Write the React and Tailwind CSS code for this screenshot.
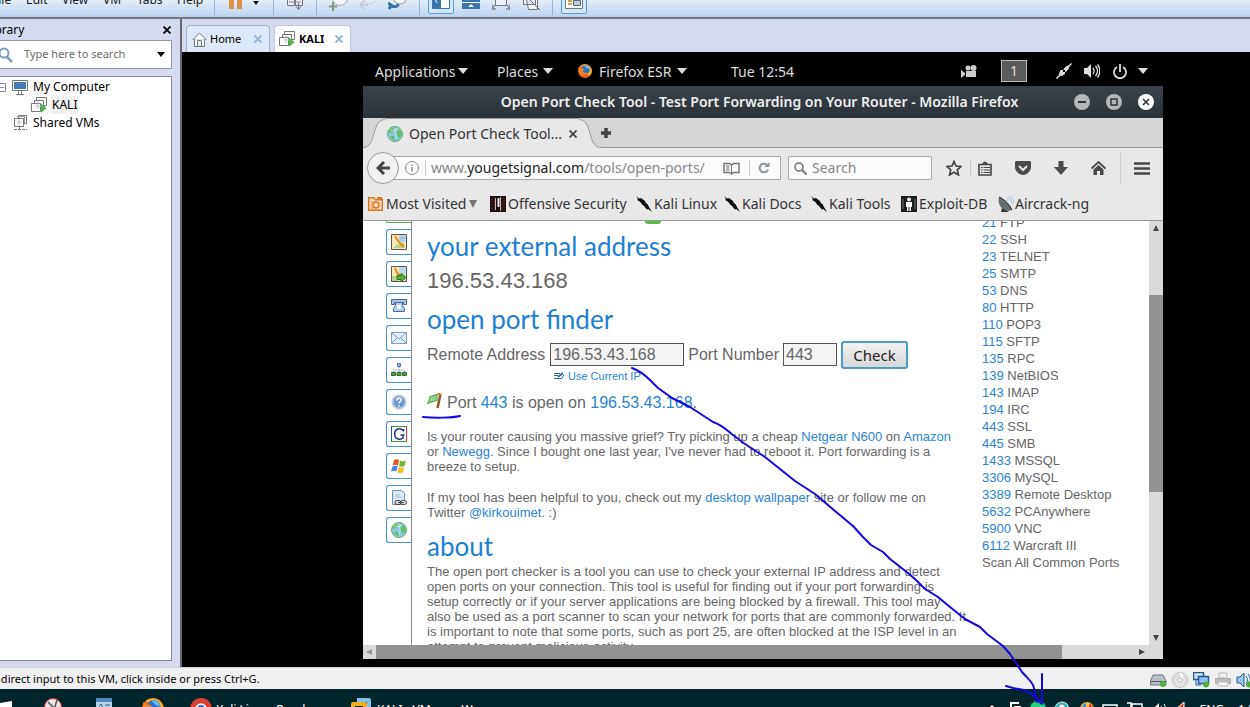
import React from "react";

const ports = [
    ["21", "FTP"], ["22", "SSH"], ["23", "TELNET"], ["25", "SMTP"], ["53", "DNS"],
    ["80", "HTTP"], ["110", "POP3"], ["115", "SFTP"], ["135", "RPC"], ["139", "NetBIOS"],
    ["143", "IMAP"], ["194", "IRC"], ["443", "SSL"], ["445", "SMB"], ["1433", "MSSQL"],
    ["3306", "MySQL"], ["3389", "Remote Desktop"], ["5632", "PCAnywhere"], ["5900", "VNC"], ["6112", "Warcraft III"],
];

/* ---------- icons ---------- */

function Svg({ w = 16, h = 16, box, className = "", children }) {
    return (
        <svg width={w} height={h} viewBox={box || `0 0 ${w} ${h}`} fill="none" aria-hidden="true" className={`shrink-0 ${className}`}>
            {children}
        </svg>
    );
}

const Caret = ({ className = "" }) => (
    <Svg w={10} h={6} className={className}><path d="M0 0h10L5 6z" fill="currentColor" /></Svg>
);

const Close = ({ className = "" }) => (
    <Svg w={8} h={8} className={className}><path d="M0.5 0.5l7 7M7.5 0.5l-7 7" stroke="currentColor" strokeWidth="1.8" /></Svg>
);

const VmIcon = () => (
    <Svg w={16} h={16}>
        <path d="M5.500 3v-2.500h10v8h-3" fill="#fff" stroke="#777" />
        <path d="M3.500 6v-2.500h9v8H9" fill="#fff" stroke="#777" />
        <path d="M9.500 14.500h-9v-8h9z" fill="#fff" stroke="#777" />
        <path d="M4 9h7M7 4v8" stroke="#c4bfd8" />
        <path d="M10 6.500l5.500 4.500-5.500 5z" fill="#4fb648" />
    </Svg>
);

const SharedIcon = () => (
    <Svg w={14} h={16}>
        <path d="M4.500 3.500v-3h8v8h-2" stroke="#777" />
        <path d="M0.500 3.500h9v8h-9z" fill="#fff" stroke="#777" />
        <path d="M2.500 1.500h8v8" stroke="#999" />
        <path d="M3 7h5M5 4v7" stroke="#bbb" />
        <path d="M5.500 12v3M0 14.500h13" stroke="#777" strokeDasharray="3 1" />
    </Svg>
);

const ComputerIcon = () => (
    <Svg w={16} h={15}>
        <path d="M0.500 0.500h15v10h-15z" fill="#fff" stroke="#777" />
        <path d="M2 2h12v7H2z" fill="#3f7cb8" />
        <path d="M6.500 11v3M9.500 11v3M4 14.500h8" stroke="#777" />
    </Svg>
);

const Firefox = ({ size = 14 }) => (
    <Svg w={size} h={size} box="0 0 16 16">
        <circle cx="8" cy="8" r="8" fill="#e8641b" />
        <path d="M3 2a8 8 0 0 1 12.500 4c.8 4-1 6-3 7z" fill="#f7b52c" />
        <circle cx="8.500" cy="6.500" r="5" fill="#2b6fc2" />
        <path d="M7 2c3-1 6 1 6 4l-3-1z" fill="#69c3ee" />
        <path d="M1 3c1 0 2 .5 2.500 1.500 1.500 0 3 .5 4 2L5.500 8c1 2.500 4 2.500 6 1-1 4-6 5-9 2C.5 9 .3 5 1 3z" fill="#f0802a" />
    </Svg>
);

const Globe = ({ size = 16 }) => (
    <Svg w={size} h={size} box="0 0 16 16">
        <circle cx="8" cy="8" r="7.500" fill="#8cc8e6" stroke="#5fae5c" />
        <path d="M1.500 6c1-3 4-4.500 6-4l-1 3-3 2zM9 6l3-3c2 1.500 3 4 2.500 6L12 12l-2-3zM3 10h4l1 4c-2 0-4-1-5-4z" fill="#5fc163" />
        <path d="M3 4c3 1 6 0 8-1M7 2c2 3 3 6 1 11" stroke="#fff" strokeOpacity=".5" />
    </Svg>
);

const KaliIcon = () => (
    <Svg w={16} h={16}>
        <path d="M0 0l3 2.500 2-.5 4 3 .5 2 2 1 1.500 3 3 5-4.500-3.500-1.500-2.500-3.500-1-2.500-3.500L1 4l1-1z" fill="#111" />
        <path d="M4 4l5 3.500M8 8l4 5" stroke="#111" strokeWidth="2.500" />
    </Svg>
);

const MostVisited = () => (
    <Svg w={15} h={15}>
        <path d="M.7 1.700h5l1.500 2h7.100v10.600H.7z" fill="#f8dcc0" stroke="#d9761d" strokeWidth="1.400" />
        <path d="M9 1h5v2H9z" fill="#d9761d" />
        <circle cx="8" cy="9" r="3" stroke="#d9761d" strokeWidth="1.400" />
        <path d="M3 6h2M3 9h1M3 12h2" stroke="#d9761d" />
    </Svg>
);

const OffSec = () => (
    <Svg w={16} h={16}>
        <path d="M0 0h16v16H0z" fill="#1a0d0d" />
        <path d="M2 2v12M4.500 1v14M12 2v12M14 1v14" stroke="#6b2a26" strokeDasharray="2 1" />
        <path d="M5.500 2v12M10.500 1v14" stroke="#bbb" />
        <path d="M7.500 2h2v9h-2z" fill="#eee" />
    </Svg>
);

const ExploitIcon = () => (
    <Svg w={16} h={16}>
        <path d="M0 0h16v16H0z" fill="#1c1c1c" />
        <circle cx="8" cy="3.500" r="2" fill="#fff" />
        <path d="M5 6h6v5h-1v4H8.500v-4h-1v4H6v-4H5z" fill="#fff" />
        <path d="M2 3v10M14 3v10" stroke="#777" />
    </Svg>
);

const AircrackIcon = () => (
    <Svg w={16} h={16}>
        <path d="M1 1c-2 6 2 13 9 14l4-1C12 9 7 3 1 1z" fill="#667070" />
        <path d="M1 1c5 2 10 7 13 13" stroke="#222" />
        <path d="M8 5l2-1M9 2c3 0 5 3 5 6M11 0c3 1 5 4 5 8" stroke="#9cc4e8" />
        <path d="M4 12l-1 4h8z" fill="#333" />
    </Svg>
);

const sideIcons = [
    <Svg key="map"><path d="M.5.500h15v15H.500z" fill="#f4eab5" stroke="#555" /><path d="M8 1h7v7H8z" fill="#bcd8ee" /><path d="M2 14c3-1 2-3 5-4s3-1 6-1v5z" fill="#b9d58a" /><path d="M4 2l3 5 6 6" stroke="#e58a1c" strokeWidth="2" /><path d="M11 1v7M8 4h7" stroke="#8fb4d6" /></Svg>,
    <Svg key="trace"><path d="M.5.500h15v15H.500z" fill="#f4eab5" stroke="#555" /><path d="M8 1h7v7H8z" fill="#bcd8ee" /><path d="M1 10h6v5H1z" fill="#b9d58a" /><path d="M4 2l2 5 4 3" stroke="#e58a1c" strokeWidth="2" /><path d="M6 9.500h4v-2l5.500 4-5.500 4v-2H6z" fill="#57ad3c" stroke="#2e7a20" /></Svg>,
    <Svg key="phone"><path d="M.5 1.500h15v5h-3v-2h-9v2h-3z" fill="#a9c3e6" stroke="#46699c" /><path d="M4.500 4.500h7v3l2 3v3h-11v-3l2-3z" fill="#b4cceb" stroke="#46699c" /><path d="M6 7h4v4H6z" fill="#fff" /></Svg>,
    <Svg key="mail"><path d="M.5 2.500h15v11H.500z" fill="#e3eefb" stroke="#7d9cc8" /><path d="M1 3l7 6 7-6M1 13l5-5M15 13l-5-5" stroke="#7d9cc8" /></Svg>,
    <Svg key="net"><path d="M6.500 1.500h3v3h-3z" fill="#8fb2e0" stroke="#5679ad" /><path d="M8 5v5M2.500 10V8h11v2" stroke="#777" strokeDasharray="1 1" /><path d="M.5 10.500h4v3h-4zM6 10.500h4v3H6zM11.500 10.500h4v3h-4z" fill="#56a052" stroke="#2f6d2d" /></Svg>,
    <Svg key="help"><circle cx="8" cy="8" r="6.500" fill="#6c96d2" stroke="#b9c8dd" strokeWidth="2" /><path d="M5.800 6.500c0-3 4.500-3 4.500-.3 0 1.500-2.300 1.500-2.300 3.300M8 11v1.600" stroke="#fff" strokeWidth="1.600" /></Svg>,
    <Svg key="g"><path d="M.5.500h15v15H.500z" fill="#fff" /><path d="M0 .500h16" stroke="#3b9a3b" /><path d="M.5 0v16" stroke="#2a51b4" /><path d="M15.500 0v16" stroke="#d33" /><path d="M0 15.500h16" stroke="#3b9a3b" /><path d="M12.500 5.500V3M12.500 5C11 2.500 8.500 2.500 7 3c-4.500 1.500-4.300 9 0 10 2 .5 4 0 5-1V9M9.500 9h4" stroke="#23348f" strokeWidth="1.500" /></Svg>,
    <Svg key="win"><path d="M3 2c2-1 4-1 5 0L7 7.500c-2-1-4-1-5.500 0z" fill="#e2542c" /><path d="M9 2.500c2 1 4 1 6 0L13.500 8c-2 1-4 1-5.500 0z" fill="#7ab83a" /><path d="M1.500 8.500c2-1 4-1 5.200 0l-1.400 5c-1.500-1-3.500-1-5.300 0z" fill="#4a86d8" /><path d="M7.700 9c2 1 4 1 5.500 0L12 14.500c-2 1-4 1-5.600 0z" fill="#f2bf2e" /></Svg>,
    <Svg key="page"><path d="M1.500.500h9l3 3v11h-12z" fill="#dce9f8" stroke="#6f8fb9" /><path d="M4 5h5M4 7h7" stroke="#a8bfdc" /><rect x="4" y="10.500" width="6" height="4" rx="2" fill="#ddd" stroke="#444" /><rect x="9.500" y="10.500" width="6" height="4" rx="2" fill="#ddd" stroke="#444" /><path d="M7 12.500h6" stroke="#444" /></Svg>,
    <Globe key="globe" />,
];

/* ---------- VMware chrome ---------- */

function MenuBar() {
    return (
        <header className="flex h-[19px] shrink-0 flex-col justify-end overflow-hidden border-b-2 border-[#747683] bg-linear-to-b from-[#e4edf8] to-[#bcd3ee] text-[12px]">
            <div className="mb-[2px] flex h-[28px] shrink-0 items-center text-[#222]">
                <nav className="-ml-[8px] mb-[2px] flex w-[222px] shrink-0 leading-[18px]">
                    <button className="w-[34px] text-left">File</button>
                    <button className="w-[36px] text-left">Edit</button>
                    <button className="w-[41px] text-left">View</button>
                    <button className="w-[34px] text-left">VM</button>
                    <button className="w-[40px] text-left">Tabs</button>
                    <button className="text-left">Help</button>
                </nav>
                <div className="flex items-center self-stretch">
                    <span className="h-full w-px bg-[#94b4d8]" />
                    <Svg w={13} h={20} className="ml-[14px]"><path d="M0 0h5v18H0zM8 0h5v18H8z" fill="#d9924a" /></Svg>
                    <Svg w={6} h={12} className="ml-[11px]"><path d="M0 6h6L3 10z" fill="#111" /></Svg>
                    <span className="ml-[14px] h-full w-px bg-[#94b4d8]" />
                    <Svg w={17} h={20} className="ml-[13px]"><path d="M.5 4.500h7v10h-7zM8.500 4.500h7v10h-7z" fill="#eef" stroke="#777" /><path d="M2 11h12" stroke="#888" /><path d="M11.500 12v6M9 15.500l2.500 3 2.500-3" stroke="#777" /></Svg>
                    <span className="ml-[12px] h-full w-px bg-[#94b4d8]" />
                    <Svg w={20} h={20} className="ml-[12px]"><circle cx="11" cy="7" r="7.500" fill="#f4f6f9" stroke="#aaa" /><path d="M4 11v9M0 15.500h8" stroke="#7d9c7d" strokeWidth="2" /></Svg>
                    <Svg w={18} h={20} className="ml-[11px] opacity-60"><circle cx="10" cy="6" r="7" stroke="#bbb" /><path d="M1 14h7M4 10l-4 4 4 4" stroke="#bbb" strokeWidth="2" /></Svg>
                    <Svg w={20} h={20} className="ml-[10px]"><circle cx="12" cy="6" r="7" fill="#f4f6f9" stroke="#999" /><path d="M0 12l3 2-2 4M3 15.500h5l3-2" stroke="#3a74ae" strokeWidth="3" /></Svg>
                    <span className="ml-[11px] h-full w-px bg-[#94b4d8]" />
                    <button aria-label="Show library" className="ml-[8px] flex h-[26px] w-[26px] items-center justify-center rounded-[2px] border border-[#5b9bd8] bg-[#d4e6f9]">
                        <Svg w={18} h={20}><path d="M.5 0h17v17.500H.500z" fill="#fff" stroke="#3a74ae" /><path d="M1 0h8v17H1z" fill="#3a74ae" /><path d="M3 8l2 4" stroke="#fff" /></Svg>
                    </button>
                    <Svg w={18} h={20} className="ml-[8px]"><path d="M0 0h18v18H0z" fill="#3a74ae" /><path d="M0 11.500h18" stroke="#fff" /><path d="M6 16l3-3 3 3z" fill="#fff" /></Svg>
                    <Svg w={18} h={20} className="ml-[12px]"><path d="M3.500 0v14.500h11V0" fill="#eef3fa" stroke="#777" /><path d="M3 14l-3 4M15 14l3 4M0 13v5h4M18 13v5h-4" stroke="#666" /></Svg>
                    <Svg w={18} h={20} className="ml-[12px]"><path d="M1.500 0v13.500h12V0M4.500 8.500h11v10h-9z" fill="#eef3fa" stroke="#777" /><path d="M5 6l13 13" stroke="#666" /></Svg>
                    <span className="ml-[12px] h-full w-px bg-[#94b4d8]" />
                    <button aria-label="Thumbnails" className="ml-[8px] flex h-[26px] w-[26px] items-center justify-center rounded-[2px] border border-[#5b9bd8] bg-[#d4e6f9]">
                        <Svg w={18} h={20}><path d="M.5 0h17v17.500H.500z" fill="#fff" stroke="#777" /><path d="M3 10h4M3 13h4" stroke="#c9a35c" strokeWidth="2" /><path d="M8.500 9.500h7v5h-7z" fill="#b7cde8" stroke="#666" /></Svg>
                    </button>
                </div>
            </div>
        </header>
    );
}

function Library() {
    return (
        <aside className="flex w-[180px] shrink-0 flex-col pr-[8px] text-[12px] text-black">
            <div className="flex h-[21px] items-center justify-between">
                <span className="-ml-[15px]">Library</span>
                <button aria-label="Close library" className="pr-[1px]"><Close /></button>
            </div>
            <label className="flex h-[29px] items-center border border-l-0 border-[#99a] bg-white">
                <Svg w={14} h={16}><circle cx="4" cy="6" r="4.500" stroke="#7d9cc0" strokeWidth="2" /><path d="M7 10l5 5" stroke="#7d9cc0" strokeWidth="2.500" /></Svg>
                <input type="text" aria-label="Search library" placeholder="Type here to search" className="ml-[10px] w-0 flex-1 text-[11px] outline-none placeholder:text-[#6b6b6b]" />
                <Svg w={8} h={5} className="mr-[6px]"><path d="M0 0h8L4 5z" fill="#000" /></Svg>
            </label>
            <ul className="mb-[6px] mt-[7px] flex-1 border border-l-0 border-[#889] bg-white pt-[1px] leading-[18px]">
                <li className="flex items-center">
                    <Svg w={6} h={9} className="mr-[6px]"><path d="M-3 .500h8.500v8H-3M0 4.500h4" stroke="#88a" /></Svg>
                    <ComputerIcon /><span className="ml-[5px]">My Computer</span>
                </li>
                <li className="flex items-center pl-[31px]"><VmIcon /><span className="ml-[4px] bg-[#efefef] px-[1px]">KALI</span></li>
                <li className="flex items-center pl-[14px]"><SharedIcon /><span className="ml-[5px]">Shared VMs</span></li>
            </ul>
        </aside>
    );
}

function StatusBar() {
    return (
        <footer className="flex h-[22px] shrink-0 items-center justify-between overflow-hidden border-t border-[#d0d0d0] bg-[#f0f0f0] pt-[2px] text-[11px] text-black">
            <span className="-ml-[14px] whitespace-nowrap">To direct input to this VM, click inside or press Ctrl+G.</span>
            <div className="-mr-[6px] flex items-center gap-[5px]">
                <Svg w={17} h={16}><path d="M3 3h10l3 6v4H.500V9z" fill="#b9bfc9" stroke="#70757e" /><path d="M1 9.500h15" stroke="#555" /><circle cx="13" cy="12" r="3" fill="#4caf3a" /></Svg>
                <Svg w={16} h={16}><circle cx="8" cy="8" r="7.500" fill="#e2e2e2" stroke="#c4c4c4" /><circle cx="8" cy="8" r="2" fill="#fff" stroke="#bbb" /><path d="M8 1l3 5" stroke="#fff" strokeWidth="2" /></Svg>
                <Svg w={17} h={16}><path d="M.5.500h10v7H.500z" fill="#cfe2f6" stroke="#1d5b99" strokeWidth="1.500" /><path d="M5.500 4.500h10v7h-10z" fill="#8fc0ef" stroke="#1d5b99" strokeWidth="1.500" /><path d="M3 8v5h5" stroke="#1d5b99" /><circle cx="13" cy="12.500" r="3" fill="#4caf3a" /></Svg>
                <Svg w={16} h={16}><path d="M4 1h8v5H4z" fill="#eee" stroke="#bbb" /><path d="M.5 6.500h15v5H.500z" fill="#bbb" stroke="#aaa" /><path d="M3 10h10v4H3z" fill="#f4f4f4" stroke="#bbb" /></Svg>
                <Svg w={20} h={16}><path d="M1 5h3l4-4v14l-4-4H1z" fill="#9cc4ea" stroke="#1d5b99" /><path d="M10 4c2 3 2 5 0 8M12 2c3 4 3 8 0 12" stroke="#1d5b99" /><circle cx="13" cy="12.500" r="3" fill="#4caf3a" /></Svg>
            </div>
        </footer>
    );
}

function Taskbar() {
    return (
        <div className="h-[18px] shrink-0 overflow-hidden bg-[#02252b] text-[12px] text-white">
            <div className="flex h-[40px] items-center whitespace-nowrap">
                <div className="flex flex-1 items-center">
                    <Svg w={12} h={20}><path d="M0 4l12-2v8H0zM0 11h12v8L0 17z" fill="#fff" /></Svg>
                    <Svg w={18} h={24} className="ml-[32px]"><circle cx="9" cy="10" r="8.500" fill="#e8e4e4" stroke="#c33" /><path d="M4 5l8 8M13 3l-3 10" stroke="#555" strokeWidth="1.500" /></Svg>
                    <Svg w={16} h={22} className="ml-[34px]"><path d="M0 0h16v22H0z" fill="#b8d4ec" /><path d="M0 0h16v4H0z" fill="#4b87c0" /><path d="M3 8l2-2 2 4M9 7h5M9 10h5" stroke="#357" /></Svg>
                    <span className="ml-[30px]"><Firefox size={22} /></span>
                    <Svg w={22} h={22} className="ml-[26px]"><circle cx="11" cy="11" r="11" fill="#da4236" /><path d="M0 11a11 11 0 0 0 9 11l4-8z" fill="#2ea44f" /><path d="M22 9H11v13a11 11 0 0 0 11-13z" fill="#f7c92c" /><circle cx="11" cy="11" r="5" fill="#3f7de0" stroke="#fff" strokeWidth="1.500" /></Svg>
                    <span className="ml-[4px] w-[135px] pt-[2px]">Kali Linux, Rand...</span>
                    <Svg w={20} h={22} className="mr-[6px]"><path d="M6 2h12v13" stroke="#7cc4ea" strokeWidth="4" strokeLinejoin="round" /><path d="M2 6h12v13H2z" fill="#08313a" stroke="#f2b01e" strokeWidth="4" strokeLinejoin="round" /></Svg>
                    <span className="pt-[2px]">KALI - VMware W...</span>
                </div>
                <div className="flex items-center gap-[8px]">
                    <Svg w={10} h={10} className="mr-[5px]"><path d="M1 6l4-4 4 4" stroke="#fff" strokeWidth="1.500" /></Svg>
                    <Svg w={12} h={14}><path d="M1 6V1h8M5 13V5h6" stroke="#fff" strokeWidth="2" /></Svg>
                    <Svg w={16} h={16}><circle cx="8" cy="8" r="8" fill="#1fd67c" /></Svg>
                    <Svg w={16} h={16}><circle cx="8" cy="8" r="7" fill="#38aeb4" stroke="#cfe" /><path d="M6 6c1-3 5-1 3 2" stroke="#fff" strokeWidth="2" /></Svg>
                    <Svg w={16} h={16}><circle cx="9" cy="8" r="7" fill="#f2c230" /><path d="M2 8L8 1v8z" fill="#3f7de0" /><path d="M12 2l4 6h-6z" fill="#d33" /></Svg>
                    <Svg w={16} h={10}><path d="M1 1h14v8H1z" stroke="#fff" strokeWidth="1.500" /></Svg>
                    <Svg w={17} h={14}><path d="M1 1h4v10M6 2h10v9H6z" stroke="#fff" strokeWidth="1.500" /></Svg>
                    <Svg w={16} h={14}><path d="M1 5h3l4-4v12L4 9H1z" fill="#fff" /><path d="M10 4c1 2 1 4 0 6M13 2c2 3 2 7 0 10" stroke="#fff" /></Svg>
                    <Svg w={14} h={16}><path d="M1 8l8-7v14z" fill="#d9472c" stroke="#fff" /></Svg>
                    <span className="ml-[2px] pt-[2px]">ENG</span>
                    <span className="ml-[6px] w-[12px] self-start pt-[1px] leading-[20px]">1:26</span>
                </div>
            </div>
        </div>
    );
}

/* ---------- guest desktop ---------- */

function GnomeBar() {
    return (
        <div className="flex h-[34px] shrink-0 items-center pt-[4px] text-[14px] text-[#ddd]">
            <button className="ml-[12px] flex w-[122px] items-center gap-[3px]">Applications <Caret /></button>
            <button className="flex w-[81px] items-center gap-[5px]">Places <Caret /></button>
            <button className="flex w-[153px] items-center gap-[5px]">
                <Firefox /><span className="ml-[2px]">Firefox ESR</span> <Caret />
            </button>
            <span>Tue 12:54</span>
            <div className="ml-auto mr-[15px] flex items-center">
                <Svg w={16} h={13}><circle cx="7" cy="3" r="2.500" fill="#ccc" /><circle cx="12.500" cy="3" r="3" fill="#ccc" /><path d="M5 6h10v6H5zM0 5l4 3v2l-4 3z" fill="#ccc" /></Svg>
                <button className="ml-[24px] h-[22px] w-[26px] border border-[#bbb] bg-[#5b5b5b] leading-[20px]">1</button>
                <Svg className="ml-[29px]"><path d="M15.500.500L10 6" stroke="#ddd" strokeWidth="1.500" /><path d="M.5 15.500L6 10" stroke="#ddd" strokeWidth="1.500" /><path d="M2.500 12l2-5 2.500 0 0 2 2 0 0 2-3 2z" fill="#ddd" /><path d="M7.500 6l3-3 3-.5-.5 3-3 3.500-1-.5v-1.500H7.500z" fill="#ddd" /></Svg>
                <Svg w={16} h={14} className="ml-[12px]"><path d="M0 4h3l4-4v14l-4-4H0z" fill="#ddd" /><path d="M9 4c1.500 2 1.500 4 0 6M11.500 2c2.500 3 2.500 7 0 10M13.500.500c3 4 3 9 0 13" stroke="#ddd" strokeWidth="1.300" /></Svg>
                <Svg w={14} h={15} className="ml-[13px]"><path d="M4 3a6 6 0 1 0 6 0M7 0v8" stroke="#ddd" strokeWidth="1.800" /></Svg>
                <span className="ml-[11px]"><Caret /></span>
            </div>
        </div>
    );
}

function TitleBar() {
    return (
        <div className="flex h-[32px] shrink-0 items-center bg-linear-to-b from-[#3a434b] to-[#2b3238] pl-[82px] pr-[9px]">
            <h1 className="flex-1 whitespace-nowrap pb-[2px] text-center text-[14px] font-semibold text-[#eee]">Open Port Check Tool - Test Port Forwarding on Your Router - Mozilla Firefox</h1>
            <div className="flex gap-[16px]">
                <button aria-label="Minimize" className="rounded-full bg-[#b5b8ba]"><Svg><path d="M4 8h8" stroke="#2d343a" strokeWidth="2" /></Svg></button>
                <button aria-label="Maximize" className="rounded-full bg-[#b5b8ba]"><Svg><path d="M5 5h6v6H5z" stroke="#2d343a" strokeWidth="1.500" /></Svg></button>
                <button aria-label="Close window" className="rounded-full bg-white"><Svg><path d="M5 5l6 6M11 5l-6 6" stroke="#2d343a" strokeWidth="1.600" /></Svg></button>
            </div>
        </div>
    );
}

function TabStrip() {
    return (
        <div className="flex h-[30px] shrink-0 bg-[#d5d5d5] text-[14px] text-[#333]">
            <Svg w={22} h={30}><path d="M0 30v-1c14 0 8-28 22-28v29z" fill="#e8e8e8" /><path d="M0 29.500c14 0 8-28 22-28" stroke="#999" /></Svg>
            <div className="flex w-[194px] items-center border-t border-[#999] bg-[#e8e8e8]">
                <span className="ml-[2px] flex"><Globe /></span>
                <span className="ml-[6px] flex-1 whitespace-nowrap">Open Port Check Tool...</span>
                <button aria-label="Close tab" className="mr-[2px] text-[#444]"><Close /></button>
            </div>
            <Svg w={22} h={30}><path d="M22 30v-1C8 29 14 1 0 1v29z" fill="#e8e8e8" /><path d="M22 29.500C8 29.500 14 1.500 0 1.500" stroke="#999" /></Svg>
            <div className="flex flex-1 items-center border-b border-[#999]">
                <button aria-label="New tab"><Svg w={10} h={10}><path d="M5 0v10M0 5h10" stroke="#444" strokeWidth="3.500" /></Svg></button>
            </div>
        </div>
    );
}

function NavBar() {
    return (
        <div className="flex h-[40px] shrink-0 items-center bg-[#e8e8e8] pl-[4px] pr-[13px] text-[14px]">
            <button aria-label="Back" className="z-10 flex size-[32px] shrink-0 items-center justify-center rounded-full border border-[#999] bg-[#f2f2f2]">
                <Svg w={15} h={14}><path d="M8 1L2 7l6 6M2 7h12" stroke="#444" strokeWidth="3" /></Svg>
            </button>
            <div className="-ml-[8px] flex h-[24px] flex-1 items-center border border-[#aaa] bg-[#fbfbfb] pl-[13px]">
                <Svg w={14} h={14}><circle cx="7" cy="7" r="6.500" stroke="#888" /><path d="M7 6v4.500M7 3.500v1.500" stroke="#888" strokeWidth="1.500" /></Svg>
                <span className="ml-[6px] h-[16px] w-px bg-[#ccc]" />
                <span className="ml-[5px] flex-1 whitespace-nowrap pb-[1px] text-[#888]">www.<span className="text-[#222]">yougetsignal.com</span>/tools/open-ports/</span>
                <Svg w={17} h={13}><path d="M1 1.500h5.500l2 1.500 2-1.500H16v9h-5.500l-2 1.500-2-1.500H1z" stroke="#777" strokeWidth="1.500" /><path d="M3 4h3.500M3 6h3.500M3 8h3.500M8.500 3v8" stroke="#777" /></Svg>
                <span className="ml-[9px] h-[16px] w-px bg-[#ccc]" />
                <button aria-label="Reload" className="ml-[8px] mr-[10px]"><Svg w={12} h={12}><path d="M10 7.500a4.300 4.300 0 1 1-1-4.500" stroke="#8a949e" strokeWidth="2" /><path d="M11.500 0v5h-5z" fill="#8a949e" /></Svg></button>
            </div>
            <label className="ml-[7px] flex h-[24px] w-[144px] items-center rounded-[2px] border border-[#aaa] bg-[#fbfbfb] pl-[5px]">
                <Svg w={13} h={13}><circle cx="5" cy="5" r="4" stroke="#888" strokeWidth="1.800" /><path d="M8 8l5 5" stroke="#888" strokeWidth="2.500" /></Svg>
                <input type="text" aria-label="Search" placeholder="Search" className="ml-[5px] w-0 flex-1 pb-[1px] outline-none placeholder:text-[#888]" />
            </label>
            <div className="ml-[14px] flex items-center">
                <Svg><path d="M8 1.500l2 4.500 5 .5-3.700 3.300L12.500 15 8 12.200 3.500 15l1.200-5.200L1 6.500 6 6z" stroke="#444" strokeWidth="1.700" /></Svg>
                <span className="ml-[8px] h-[18px] w-px bg-[#ccc]" />
                <Svg w={14} h={15} className="ml-[7px]"><path d="M1 3.500h12v10.500H1z" stroke="#444" strokeWidth="1.600" /><path d="M5 3a2 2 0 0 1 4 0z" fill="#444" stroke="#444" /><path d="M3 6.500h1.500M5.500 6.500H12M3 9h1.500M5.500 9H12M3 11.500h1.500M5.500 11.500H12" stroke="#444" strokeWidth="1.200" /></Svg>
                <Svg w={16} h={14} className="ml-[23px]"><path d="M1 0h14l1 1v5c0 4-4 8-8 8S0 10 0 6V1z" fill="#4a4a4a" /><path d="M4 5l4 4 4-4" stroke="#e8e8e8" strokeWidth="2" /></Svg>
                <Svg w={14} h={14} className="ml-[23px]"><path d="M4.500 0h5v6H14l-7 8-7-8h4.500z" fill="#4a4a4a" /></Svg>
                <Svg w={15} h={14} className="ml-[23px]"><path d="M.5 7.500l7-6.500 7 6.500" stroke="#4a4a4a" strokeWidth="1.800" /><path d="M2.500 8.500l5-4.500 5 4.500V14H9v-4H6v4H2.500z" fill="#4a4a4a" /></Svg>
                <span className="ml-[14px] h-[32px] w-px bg-[#d0d0d0]" />
                <button aria-label="Menu" className="ml-[13px]"><Svg w={16} h={13}><path d="M0 1.500h16M0 6.500h16M0 11.500h16" stroke="#444" strokeWidth="2.500" /></Svg></button>
            </div>
        </div>
    );
}

function Bookmarks() {
    return (
        <nav className="flex h-[33px] shrink-0 items-center whitespace-nowrap border-b border-[#999] bg-[#e8e8e8] pb-[1px] pl-[5px] text-[14px] text-[#333]">
            <a href="#most" className="flex w-[122px] items-center gap-[3px]"><MostVisited />Most Visited <Svg w={8} h={8}><path d="M0 0h8L4 8z" fill="#777" /></Svg></a>
            <a href="#offsec" className="flex w-[146px] items-center gap-[2px]"><OffSec />Offensive Security</a>
            <a href="#kali" className="flex w-[88px] items-center gap-[2px]"><KaliIcon />Kali Linux</a>
            <a href="#docs" className="flex w-[87px] items-center gap-[2px]"><KaliIcon />Kali Docs</a>
            <a href="#tools" className="flex w-[90px] items-center gap-[2px]"><KaliIcon />Kali Tools</a>
            <a href="#exploit" className="flex w-[97px] items-center gap-[2px]"><ExploitIcon />Exploit-DB</a>
            <a href="#aircrack" className="flex items-center gap-[1px]"><AircrackIcon />Aircrack-ng</a>
        </nav>
    );
}

const A = ({ children }) => <a href="#link" className="text-[#2a84d2]">{children}</a>;

const Heading = ({ children, className }) => (
    <h2 className={`font-[Lato] text-[26px] leading-[32px] text-[#1c7fd2] ${className}`}>{children}</h2>
);

function Page() {
    return (
        <main className="flex min-w-0 flex-1 overflow-hidden bg-white font-['Liberation_Sans',sans-serif] text-[13px] text-[#666]">
            <div className="flex w-[49px] shrink-0 flex-col items-end gap-[6px] border-r border-[#888]">
                <div className="h-[2px] w-[25px] rounded-bl-[3px] border-b border-l border-[#5aac4a]" />
                {sideIcons.map((icon, i) => (
                    <a key={i} href="#tool" className="flex h-[26px] w-[25px] shrink-0 items-center justify-center rounded-l-[3px] border border-r-0 border-[#4a90d0]">{icon}</a>
                ))}
            </div>

            <div className="flex-1 whitespace-nowrap pl-[15px]">
                <div className="ml-[218px] h-[3px] w-[16px] rounded-b-full bg-[#5cb848]" />
                <Heading className="mt-[6px]">your external address</Heading>
                <p className="mt-[7px] text-[22px] leading-[24px]">196.53.43.168</p>
                <Heading className="mt-[10px]">open port finder</Heading>
                <form className="mt-[4px] flex h-[31px] items-center text-[16px]">
                    <label htmlFor="addr">Remote Address</label>
                    <input id="addr" type="text" defaultValue="196.53.43.168" className="ml-[5px] h-[23px] w-[134px] border border-[#555] bg-[#f5f5f5] px-[2px]" />
                    <label htmlFor="port" className="ml-[4px]">Port Number</label>
                    <input id="port" type="text" defaultValue="443" className="ml-[4px] h-[23px] w-[54px] border border-[#555] bg-[#f5f5f5] px-[2px]" />
                    <button type="button" className="ml-[4px] h-[28px] w-[67px] rounded-[3px] border-2 border-[#4a9cc8] bg-linear-to-b from-[#f2f2f2] to-[#d8d8d8] font-['Noto_Sans'] text-[15px] leading-[22px] text-[#222]">Check</button>
                </form>
                <a href="#current" className="ml-[127px] flex h-[12px] items-center gap-[4px] text-[11px] text-[#2a84d2]">
                    <Svg w={10} h={8}><path d="M0 1.500h6M0 3.500h4M0 6.500h8l2-4" stroke="#2b6d9c" /><path d="M4 5l5-4" stroke="#2b6d9c" strokeWidth="2" /></Svg>
                    Use Current IP
                </a>
                <p className="mt-[8px] flex items-center text-[16px] leading-[26px]">
                    <Svg className="mb-[4px] mr-[4px]"><path d="M3 3.500l7-2v6l-4 1-5.500 2 1.500-3z" fill="#8fd482" stroke="#4a9a48" /><path d="M13.500 1l-3 14" stroke="#8a5a22" strokeWidth="2.500" /><path d="M10 2c2-2 3-1 4 0" stroke="#d9832c" strokeWidth="2" /></Svg>
                    <span>Port <A>443</A> is open on <A>196.53.43.168</A>.</span>
                </p>
                <p className="mt-[13px] leading-[15px]">
                    Is your router causing you massive grief? Try picking up a cheap <A>Netgear N600</A> on <A>Amazon</A><br />
                    or <A>Newegg</A>. Since I bought one last year, I've never had to reboot it. Port forwarding is a<br />
                    breeze to setup.
                </p>
                <p className="mt-[16px] leading-[15px]">
                    If my tool has been helpful to you, check out my <A>desktop wallpaper</A> site or follow me on<br />
                    Twitter <A>@kirkouimet</A>. :)
                </p>
                <Heading className="mt-[10px]">about</Heading>
                <p className="mt-[2px] leading-[15px]">
                    The open port checker is a tool you can use to check your external IP address and detect<br />
                    open ports on your connection. This tool is useful for finding out if your port forwarding is<br />
                    setup correctly or if your server applications are being blocked by a firewall. This tool may<br />
                    also be used as a port scanner to scan your network for ports that are commonly forwarded. It<br />
                    is important to note that some ports, such as port 25, are often blocked at the ISP level in an<br />
                    attempt to prevent malicious activity.
                </p>
            </div>

            <ul className="-mt-[7px] w-[167px] shrink-0 whitespace-nowrap leading-[17px]">
                {ports.map(([n, name]) => (
                    <li key={n}><A>{n}</A> {name}</li>
                ))}
                <li>Scan All Common Ports</li>
            </ul>
        </main>
    );
}

function Browser() {
    return (
        <section className="flex min-h-0 flex-1 flex-col">
            <TitleBar />
            <TabStrip />
            <NavBar />
            <Bookmarks />
            <div className="flex min-h-0 flex-1">
                <Page />
                <div className="flex w-[14px] shrink-0 flex-col items-center bg-[#dadada] py-[4px]">
                    <Svg w={6} h={6}><path d="M3 0l3 6H0z" fill="#444" /></Svg>
                    <div className="mt-[64px] h-[197px] w-full bg-[#929292]" />
                    <Svg w={6} h={6} className="mt-auto"><path d="M0 0h6L3 6z" fill="#444" /></Svg>
                </div>
            </div>
            <div className="flex h-[14px] shrink-0 items-center bg-[#dadada]">
                <Svg w={13} h={6}><path d="M9 0v6L3 3z" fill="#999" /></Svg>
                <div className="h-full w-[686px] bg-[#929292]" />
                <Svg w={6} h={6} className="ml-auto mr-[18px]"><path d="M0 0l6 3-6 3z" fill="#444" /></Svg>
            </div>
        </section>
    );
}

// freehand pen strokes drawn over the whole desktop
function PenMarks() {
    return (
        <svg viewBox="0 0 1250 707" fill="none" stroke="#1408dc" strokeWidth="2" strokeLinecap="round" strokeLinejoin="round" aria-hidden="true" className="pointer-events-none absolute left-0 top-0 z-20 w-[1250px]">
            <path d="M423 417C433 418 452 418 460 416" />
            <path d="M632 368C640 371 645 375 650 380L658 388L672 398L690 407L713 422C722 425 727 430 733 435L745 444L765 457L795 481L815 494L835 511L853 526L863 537L871 545L883 552L890 559L908 573L916 580L925 589L938 597L950 607L965 619L980 627L987 634L1003 646L1010 654L1022 672C1028 679 1033 682 1034 688L1037 702" />
            <path d="M1006 686L1013 688L1024 690L1032 694L1039 701M1042 674V704L1037 700" />
        </svg>
    );
}

export default function App() {
    return (
        <div className="relative flex h-screen flex-col overflow-hidden bg-[#d5daee] font-['Noto_Sans',sans-serif]">
            <MenuBar />
            <div className="flex min-h-0 flex-1">
                <Library />
                <div className="flex min-w-0 flex-1 flex-col border-l-2 border-[#667]">
                    <div className="flex h-[33px] shrink-0 items-end gap-[4px] pl-[4px] text-[11px] text-black">
                        <button className="flex h-[27px] w-[84px] items-center rounded-t-[4px] border border-b-0 border-[#9ab4d4] bg-[#dde9f8] pl-[5px] pr-[7px]">
                            <Svg w={15} h={15}><path d="M.5 8l7-7 7 7M2.500 7v7.500h10V7M5.500 14V8.500h4V14" fill="#fff" stroke="#777" /></Svg>
                            <span className="ml-[3px] flex-1 text-left">Home</span>
                            <Close className="text-[#8fb0cf]" />
                        </button>
                        <button className="flex h-[27px] w-[77px] items-center rounded-t-[4px] border border-b-0 border-[#b8c8e0] bg-white pl-[4px] pr-[7px] font-bold">
                            <VmIcon />
                            <span className="ml-[4px] flex-1 text-left">KALI</span>
                            <Close className="text-[#8fb0cf]" />
                        </button>
                    </div>
                    <div className="flex min-h-0 flex-1 flex-col bg-black pb-[8px] pl-[181px] pr-[87px]">
                        <GnomeBar />
                        <Browser />
                    </div>
                </div>
            </div>
            <StatusBar />
            <Taskbar />
            <PenMarks />
        </div>
    );
}
